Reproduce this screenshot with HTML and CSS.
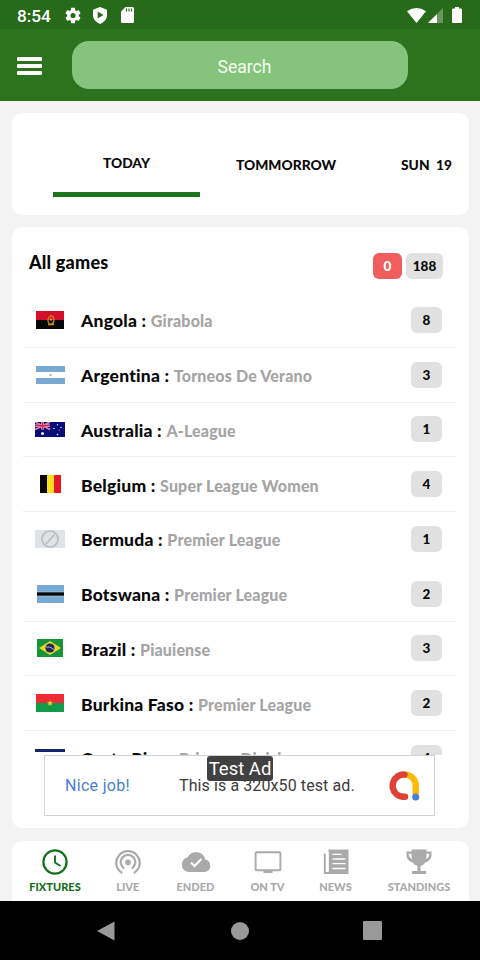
FILE: index.html
```html
<!DOCTYPE html>
<html lang="en">
<head>
<meta charset="utf-8">
<title>Fixtures</title>
<link rel="stylesheet" href="styles.css">
</head>
<body>
<div class="phone">
  <div class="statusbar">
    <span class="clock">8:54</span>
    <svg class="st-gear" width="16" height="17" viewBox="2 2 20 20"><path fill="#fff" d="M19.14 12.94c.04-.3.06-.61.06-.94s-.02-.64-.07-.94l2.03-1.58c.18-.14.23-.41.12-.61l-1.92-3.32c-.12-.22-.37-.29-.59-.22l-2.39.96c-.5-.38-1.03-.7-1.62-.94l-.36-2.54c-.04-.24-.24-.41-.48-.41h-3.84c-.24 0-.43.17-.47.41l-.36 2.54c-.59.24-1.13.57-1.62.94l-2.39-.96c-.22-.08-.47 0-.59.22L2.74 8.87c-.12.21-.08.47.12.61l2.03 1.58c-.05.3-.09.63-.09.94s.02.64.07.94l-2.03 1.58c-.18.14-.23.41-.12.61l1.92 3.32c.12.22.37.29.59.22l2.39-.96c.5.38 1.03.7 1.62.94l.36 2.54c.05.24.24.41.48.41h3.84c.24 0 .44-.17.47-.41l.36-2.54c.59-.24 1.13-.56 1.62-.94l2.39.96c.22.08.47 0 .59-.22l1.92-3.32c.12-.22.07-.47-.12-.61zM12 15.2a3.2 3.2 0 1 1 0-6.4 3.2 3.2 0 0 1 0 6.4z"/></svg>
    <svg class="st-shield" width="14" height="17" viewBox="0 0 14 17"><path fill="#fff" d="M7 0 14 2.7V8c0 4-3 7.600-7 9-4-1.400-7-5-7-9V2.700z"/><path fill="#266a1a" d="M4.700 4.600v7l5.800-3.500z"/></svg>
    <svg class="st-sd" width="13" height="16" viewBox="0 0 13 16"><path fill="#fff" d="M4.500 0H11.500Q13 0 13 1.500V14.500Q13 16 11.500 16H1.500Q0 16 0 14.500V4.500z"/><path stroke="#266a1a" stroke-width="1.200" d="M5.500 1.500v3M8 1.500v3M10.500 1.500v3"/></svg>
    <span class="spacer"></span>
    <svg class="st-wifi" width="19" height="15" viewBox="0 0 19 15"><path fill="#fff" d="M0 3.200Q9.500-3 19 3.200L9.500 15z"/></svg>
    <svg class="st-cell" width="15" height="15" viewBox="0 0 15 15"><path fill="#68965f" d="M15 0v15H0z"/><path fill="#fff" d="M9 6v9H0z"/></svg>
    <svg class="st-batt" width="10" height="16" viewBox="0 0 10 16"><path fill="#fff" d="M3 0h4v1.500h2q1 0 1 1V15q0 1-1 1H1q-1 0-1-1V2.500q0-1 1-1h2z"/></svg>
  </div>
  <header class="topbar">
    <div class="burger"><i></i><i></i><i></i></div>
    <div class="search">Search</div>
  </header>
  <nav class="card days">
    <span class="day active">TODAY</span>
    <span class="day tomorrow">TOMMORROW</span>
    <span class="day sunday">SUN&nbsp; 19</span>
  </nav>
  <main class="card games">
    <div class="games-head">
      <h1>All games</h1>
      <span class="badge live">0</span>
      <span class="badge total">188</span>
    </div>
    <div class="list">
      <div class="row"><div class="flag"><svg width="28" height="18" viewBox="0 0 28 18"><path fill="#d40f2c" d="M0 0h28v9H0z"/><path fill="#080808" d="M0 9h28v9H0z"/><path fill="none" stroke="#c9872a" stroke-width="1.300" d="M15 4.500c4 1.500 4 8-.5 8.500M15 4.500c-3.500 2-4 6-1.500 8.500M12 13.500h6"/><circle cx="15" cy="8.500" r="1.200" fill="#d49b25"/></svg></div><b class="country">Angola :</b><span class="league">Girabola</span><span class="badge">8</span></div>
      <div class="row"><div class="flag"><svg width="29" height="18" viewBox="0 0 29 18"><path fill="#fff" d="M0 0h29v18H0z"/><path fill="#78a9d3" d="M0 0h29v6H0zM0 12h29v6H0z"/><circle cx="14.500" cy="9" r="1.200" fill="#b8b09c"/></svg></div><b class="country">Argentina :</b><span class="league">Torneos De Verano</span><span class="badge">3</span></div>
      <div class="row"><div class="flag"><svg width="30" height="15" viewBox="0 0 30 15"><path fill="#080b78" d="M0 0h30v15H0z"/><path stroke="#e9d5e4" stroke-width="1.400" d="m0 0 15 7.500M15 0 0 7.500"/><path stroke="#f3dfe8" stroke-width="2.500" d="M7.500 0v7.500M0 3.700h15"/><path stroke="#d8224b" stroke-width="1.500" d="M7.500 0v7.500M0 3.700h15"/><path stroke="#d8224b" stroke-width=".7" d="m0 0 15 7.500M15 0 0 7.500"/><g fill="#fff"><circle cx="7.500" cy="11.500" r="1.500"/><circle cx="22.500" cy="2.800" r=".7"/><circle cx="19" cy="6.500" r=".7"/><circle cx="26" cy="5.500" r=".7"/><circle cx="22.500" cy="12.500" r=".8"/><circle cx="24" cy="8" r=".5"/></g></svg></div><b class="country">Australia :</b><span class="league">A-League</span><span class="badge">1</span></div>
      <div class="row"><div class="flag"><svg width="21" height="18" viewBox="0 0 21 18"><path fill="#080808" d="M0 0h7v18H0z"/><path fill="#ffdf17" d="M7 0h7v18H7z"/><path fill="#e81526" d="M14 0h7v18h-7z"/></svg></div><b class="country">Belgium :</b><span class="league">Super League Women</span><span class="badge">4</span></div>
      <div class="row plain"><div class="flag"><svg width="30" height="18" viewBox="0 0 30 18"><path fill="#e0e3e6" d="M0 0h30v18H0z"/><g fill="none" stroke="#b9bcc0" stroke-width="1.700"><circle cx="15" cy="9" r="8"/><path d="M11 14 19.500 4.500"/></g></svg></div><b class="country">Bermuda :</b><span class="league">Premier League</span><span class="badge">1</span></div>
      <div class="row"><div class="flag"><svg width="27" height="18" viewBox="0 0 27 18"><path fill="#76a9d4" d="M0 0h27v18H0z"/><path fill="#bcd5ea" d="M0 6.700h27v4.600H0z"/><path fill="#080808" d="M0 7.300h27v3.400H0z"/></svg></div><b class="country">Botswana :</b><span class="league">Premier League</span><span class="badge">2</span></div>
      <div class="row"><div class="flag"><svg width="26" height="18" viewBox="0 0 26 18"><path fill="#17933a" d="M0 0h26v18H0z"/><path fill="#e6d827" d="M13 2 24 9 13 16 2 9z"/><circle cx="13" cy="9" r="4.600" fill="#25265f"/><path fill="none" stroke="#b9bccb" stroke-width=".9" d="M8.800 8q4-1 8.200 2.500"/></svg></div><b class="country">Brazil :</b><span class="league">Piauiense</span><span class="badge">3</span></div>
      <div class="row"><div class="flag"><svg width="28" height="18" viewBox="0 0 28 18"><path fill="#ef2b35" d="M0 0h28v9H0z"/><path fill="#119a47" d="M0 9h28v9H0z"/><path fill="#fbd528" d="m14 6 .8 2.300h2.300l-1.900 1.400.7 2.300-1.900-1.400-1.900 1.400.7-2.300-1.900-1.400h2.300z"/></svg></div><b class="country">Burkina Faso :</b><span class="league">Premier League</span><span class="badge">2</span></div>
      <div class="row"><div class="flag"><svg width="30" height="18" viewBox="0 0 30 18"><path fill="#16246d" d="M0 0h30v3H0zM0 15h30v3H0z"/><path fill="#fff" d="M0 3h30v12H0z"/><path fill="#d51e32" d="M0 6h30v6H0z"/></svg></div><b class="country">Costa Rica :</b><span class="league">Primera Division</span><span class="badge">4</span></div>
    </div>
    <div class="ad">
      <span class="nice">Nice job!</span>
      <span class="ad-text">This is a 320x50 test ad.</span>
      <svg class="admob" width="32" height="30" viewBox="0 0 32 30"><g fill="none" stroke-width="6.400"><path stroke="#fbb90a" d="M15.500 3.600a11 11 0 0 1 11.200 11V23"/><path stroke="#e04135" stroke-linecap="round" d="M16 25.800H14a11.100 11.100 0 0 1 1.500-22.200"/></g><circle cx="26.700" cy="26" r="3.600" fill="#4a7fdc"/></svg>
      <span class="ad-tag">Test Ad</span>
    </div>
  </main>
  <nav class="card tabs">
    <div class="tab on t1"><svg width="26" height="26" viewBox="0 0 26 26"><circle cx="13" cy="13" r="11.600"/><path class="thin" d="M13 6.500V13.500L18.500 17"/></svg><span>FIXTURES</span></div>
    <div class="tab t2"><svg width="26" height="26" viewBox="0 0 26 26"><path d="M7.200 24A11.700 11.700 0 1 1 18.800 24"/><path d="M9.300 19.500A7.300 7.300 0 1 1 16.700 19.500"/><circle class="solid" cx="13" cy="13.400" r="2.800"/></svg><span>LIVE</span></div>
    <div class="tab t3"><svg width="30" height="26" viewBox="0 0 30 26"><path class="solid" d="M24.200 10.600A9.400 9.400 0 0 0 6.700 8.200 7.500 7.500 0 0 0 7.500 23h16.300a6.300 6.300 0 0 0 .4-12.400z"/><path class="cut" d="m10 13.500 3.600 3.500 6.700-7"/></svg><span>ENDED</span></div>
    <div class="tab t4"><svg width="28" height="26" viewBox="0 0 28 26"><rect class="thin" x="1.600" y="3.200" width="24.800" height="18" rx="1"/><path class="solid" d="M9.500 21.500h9v2.500h-9z"/></svg><span>ON TV</span></div>
    <div class="tab t5"><svg width="26" height="26" viewBox="0 0 26 26"><path class="solid" d="M5.500.500h20V25h-20z"/><path class="thin" d="M1.800 4.500V24h5"/><path class="cut slim" d="M9.500 5.300h9M9.500 10h13M9.500 14.700h13M9.500 19.500h13M5 3v19.500"/></svg><span>NEWS</span></div>
    <div class="tab t6"><svg width="26" height="26" viewBox="0 0 26 26"><path class="solid" d="M5.500.500h15v2H25.500v3.200c0 4-2.500 7-6.200 7.700a7 7 0 0 1-4.700 3.300V22h5.500v3H5.900v-3h5.500v-5.300a7 7 0 0 1-4.700-3.300C3 12.700.500 9.700.500 5.700V2.500h5z"/><path class="hole" d="M2.700 4.700h2.800c0 2 .1 3.600.5 5.200-2-.9-3.300-2.700-3.300-5.200zM23.300 4.700h-2.800c0 2-.1 3.600-.5 5.200 2-.9 3.300-2.700 3.300-5.200z"/></svg><span>STANDINGS</span></div>
  </nav>
  <footer class="sysnav">
    <svg width="18" height="20" viewBox="0 0 18 20"><path fill="#999" d="M17.500.500v19L0 10z"/></svg>
    <i class="home"></i>
    <i class="recent"></i>
  </footer>
</div>
</body>
</html>
```
FILE: styles.css
```css
* { box-sizing: border-box; }
body { margin: 0; font-family: Lato, "Open Sans", sans-serif; color: #0a0a0a; }
.phone { width: 480px; height: 960px; background: #f3f3f3; display: flex; flex-direction: column; overflow: hidden; }
svg { display: block; flex: none; }

.statusbar { height: 29px; flex: none; background: #266a1a; display: flex; align-items: center; padding: 1px 18px 0 17px; }
.clock { font: 500 17.200px/20px Roboto, sans-serif; color: #fff; width: 48px; padding-top: 1px; }
.st-shield { margin-left: 12px; }
.st-sd { margin-left: 14px; }
.spacer { flex: 1; }
.st-cell { margin: 1px 9px 0 2px; }

.topbar { height: 72px; flex: none; background: #2c731e; display: flex; padding: 12px 0 0 17px; }
.burger { width: 25px; height: 18px; margin-top: 16px; display: flex; flex-direction: column; justify-content: space-between; }
.burger i { height: 3.700px; border-radius: 1px; background: #fff; }
.search { width: 336px; height: 48px; margin-left: 30px; border-radius: 17px; background: #86c37c; color: #f5fff2; font: 400 17.500px/53px Roboto, sans-serif; text-align: center; padding-left: 9px; }

.card { margin: 0 11.500px; background: #fff; border-radius: 10px; flex: none; }
.days { margin-top: 12px; height: 102px; display: flex; overflow: hidden; padding-left: 41.500px; font-size: 13.800px; font-weight: 900; white-space: nowrap; }
.day { flex: none; line-height: 20px; margin-top: 42px; }
.day.active { width: 147px; height: 44px; margin-top: 40px; border-bottom: 5px solid #1c741b; text-align: center; }
.tomorrow { width: 201px; padding-left: 36px; }

.games { margin-top: 12px; height: 601px; display: flex; flex-direction: column; }
.games-head { height: 66px; flex: none; display: flex; align-items: center; padding: 12px 25.500px 0 17.500px; gap: 4px; }
h1 { margin: -9px auto 0 0; font-size: 18px; line-height: 22px; font-weight: 900; letter-spacing: .2px; }
.badge { min-width: 31px; height: 26px; border-radius: 6px; background: #e1e1e1; font-size: 13.500px; line-height: 27px; font-weight: 900; text-align: center; flex: none; }
.badge.live { background: #f15c5c; color: #fff; min-width: 29px; }
.badge.total { width: 37px; }
.list { flex: 1; min-height: 0; overflow: hidden; padding: 0 12.500px 0 11.500px; }
.row { height: 54.750px; display: flex; align-items: center; border-bottom: 1px solid #eee; padding-right: 14px; white-space: nowrap; }
.row.plain { border-color: transparent; }
.row .badge { margin-left: auto; }
.flag { width: 54px; margin-right: 4px; display: flex; justify-content: center; flex: none; }
.country { font-size: 17.500px; line-height: 24px; font-weight: 900; padding-top: 3px; letter-spacing: .22px; }
.league { font-size: 16px; line-height: 24px; font-weight: 900; color: #a5a5a5; margin-left: 4.500px; padding-top: 3px; letter-spacing: .16px; }

.ad { position: relative; width: 391px; height: 61px; flex: none; margin: 0 0 12px 32.500px; border: 1px solid #cdd5d8; background: #fff; display: flex; align-items: center; padding: 0 13px 0 20px; font: 400 16px/20px Roboto, sans-serif; color: #3c3c3c; white-space: nowrap; }
.nice { color: #4a80cc; width: 114px; letter-spacing: .3px; }
.ad-text { letter-spacing: .1px; }
.admob { margin-left: auto; }
.ad-tag { position: absolute; left: 162px; top: 0; width: 66px; height: 25px; border-radius: 3px; background: #414141; color: #fff; font: 400 18.500px/26px Roboto, sans-serif; text-align: center; }

.tabs { margin-top: 13px; height: 60px; border-radius: 10px 10px 0 0; display: flex; padding: 8px 0 0; }
.tab { display: flex; flex-direction: column; align-items: center; color: #aaa; font-size: 11px; line-height: 14px; font-weight: 900; gap: 5px; white-space: nowrap; }
.tab svg { fill: none; stroke: currentColor; stroke-width: 2.200; }
.tab .solid { fill: currentColor; stroke: none; }
.tab .thin { stroke-width: 1.900; }
.tab .cut { stroke: #fff; stroke-width: 2.200; }
.tab .cut.slim { stroke-width: 1.300; }
.tab .hole { fill: #fff; stroke: none; }
.tab.on { color: #147019; }
.t1 { width: 87px; }
.t2 { width: 58.500px; }
.t3 { width: 77px; }
.t4 { width: 67px; }
.t5 { width: 69px; }
.t6 { width: 98px; }

.sysnav { height: 59px; flex: none; background: #000; display: flex; align-items: center; justify-content: space-between; padding: 0 98px 0 97px; }
.home { width: 18px; height: 18px; margin-left: 1px; border-radius: 50%; background: #999; }
.recent { width: 19px; height: 19px; border-radius: 1px; background: #999; }
```
